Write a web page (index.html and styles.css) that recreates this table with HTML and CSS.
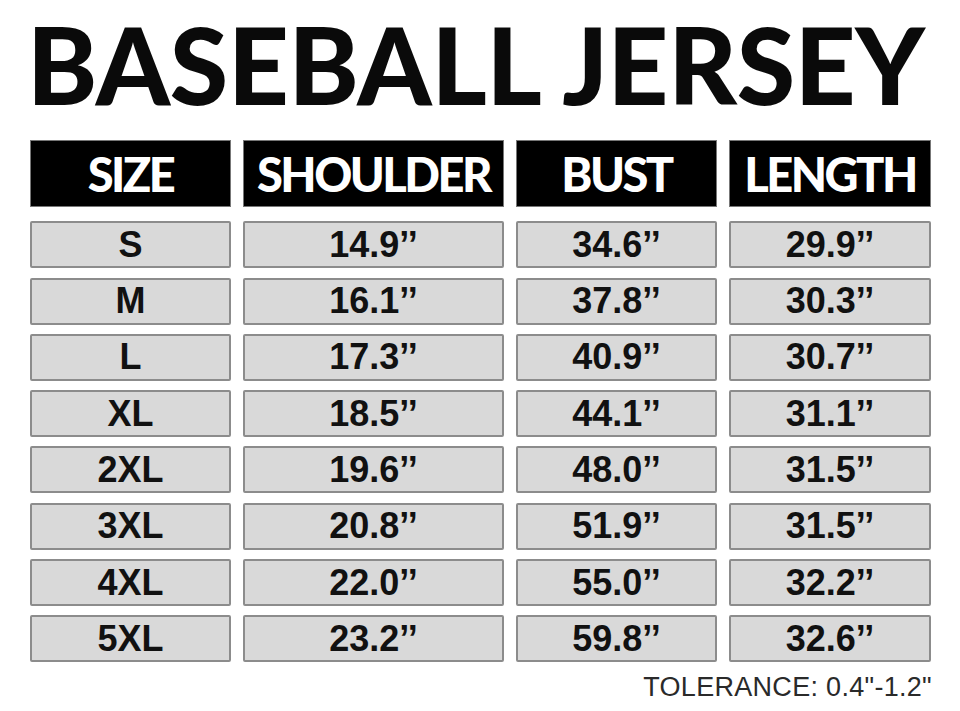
FILE: index.html
```html
<!DOCTYPE html>
<html lang="en">
<head>
    <meta charset="UTF-8">
    <meta name="viewport" content="width=device-width, initial-scale=1.0">
    <title>Baseball Jersey Size Chart</title>
    <link rel="stylesheet" href="styles.css">
</head>
<body>

    <h1 class="title">BASEBALL JERSEY</h1>

    <div class="chart">
        <div class="head">SIZE</div>
        <div class="head">SHOULDER</div>
        <div class="head">BUST</div>
        <div class="head">LENGTH</div>

        <div class="cell">S</div>
        <div class="cell">14.9’’</div>
        <div class="cell">34.6’’</div>
        <div class="cell">29.9’’</div>

        <div class="cell">M</div>
        <div class="cell">16.1’’</div>
        <div class="cell">37.8’’</div>
        <div class="cell">30.3’’</div>

        <div class="cell">L</div>
        <div class="cell">17.3’’</div>
        <div class="cell">40.9’’</div>
        <div class="cell">30.7’’</div>

        <div class="cell">XL</div>
        <div class="cell">18.5’’</div>
        <div class="cell">44.1’’</div>
        <div class="cell">31.1’’</div>

        <div class="cell">2XL</div>
        <div class="cell">19.6’’</div>
        <div class="cell">48.0’’</div>
        <div class="cell">31.5’’</div>

        <div class="cell">3XL</div>
        <div class="cell">20.8’’</div>
        <div class="cell">51.9’’</div>
        <div class="cell">31.5’’</div>

        <div class="cell">4XL</div>
        <div class="cell">22.0’’</div>
        <div class="cell">55.0’’</div>
        <div class="cell">32.2’’</div>

        <div class="cell">5XL</div>
        <div class="cell">23.2’’</div>
        <div class="cell">59.8’’</div>
        <div class="cell">32.6’’</div>
    </div>

    <p class="note">TOLERANCE: 0.4"-1.2"</p>

</body>
</html>
```

FILE: styles.css
```css
body {
    margin: 0;
    background-color: #fff;
    color: #111;
    font-family: "Liberation Sans", Arial, sans-serif;
}

.title {
    margin: 0;
    padding: 0 0 0 27px;
    font-family: Lato, "Liberation Sans", sans-serif;
    font-weight: 900;
    font-size: 106px;
    line-height: normal;
    letter-spacing: -0.3px;
    word-spacing: 2px;
    white-space: nowrap;
    color: #0a0a0a;
}

.chart {
    display: grid;
    grid-template-columns: 201px 261px 201px 202px;
    grid-template-rows: 72px repeat(8, 47px);
    column-gap: 12px;
    row-gap: 9.3px;
    margin: 12px 0 0 30px;
    width: 901px;
}

.head {
    align-self: start;
    height: 67px;
    background-color: #000;
    border: 1px solid #777;
    color: #fff;
    font-family: Lato, "Liberation Sans", sans-serif;
    font-weight: 900;
    font-size: 47px;
    letter-spacing: -2.5px;
    display: flex;
    align-items: center;
    justify-content: center;
    box-sizing: border-box;
}

.cell {
    background-color: #d9d9d9;
    border: 2px solid #8c8c8c;
    border-radius: 2px;
    font-weight: bold;
    font-size: 36px;
    color: #111;
    display: flex;
    align-items: center;
    justify-content: center;
    box-sizing: border-box;
}

.note {
    margin: 10px 0 0 0;
    width: 932px;
    text-align: right;
    font-size: 27px;
    color: #2a2a2a;
    letter-spacing: 0.3px;
}
```
